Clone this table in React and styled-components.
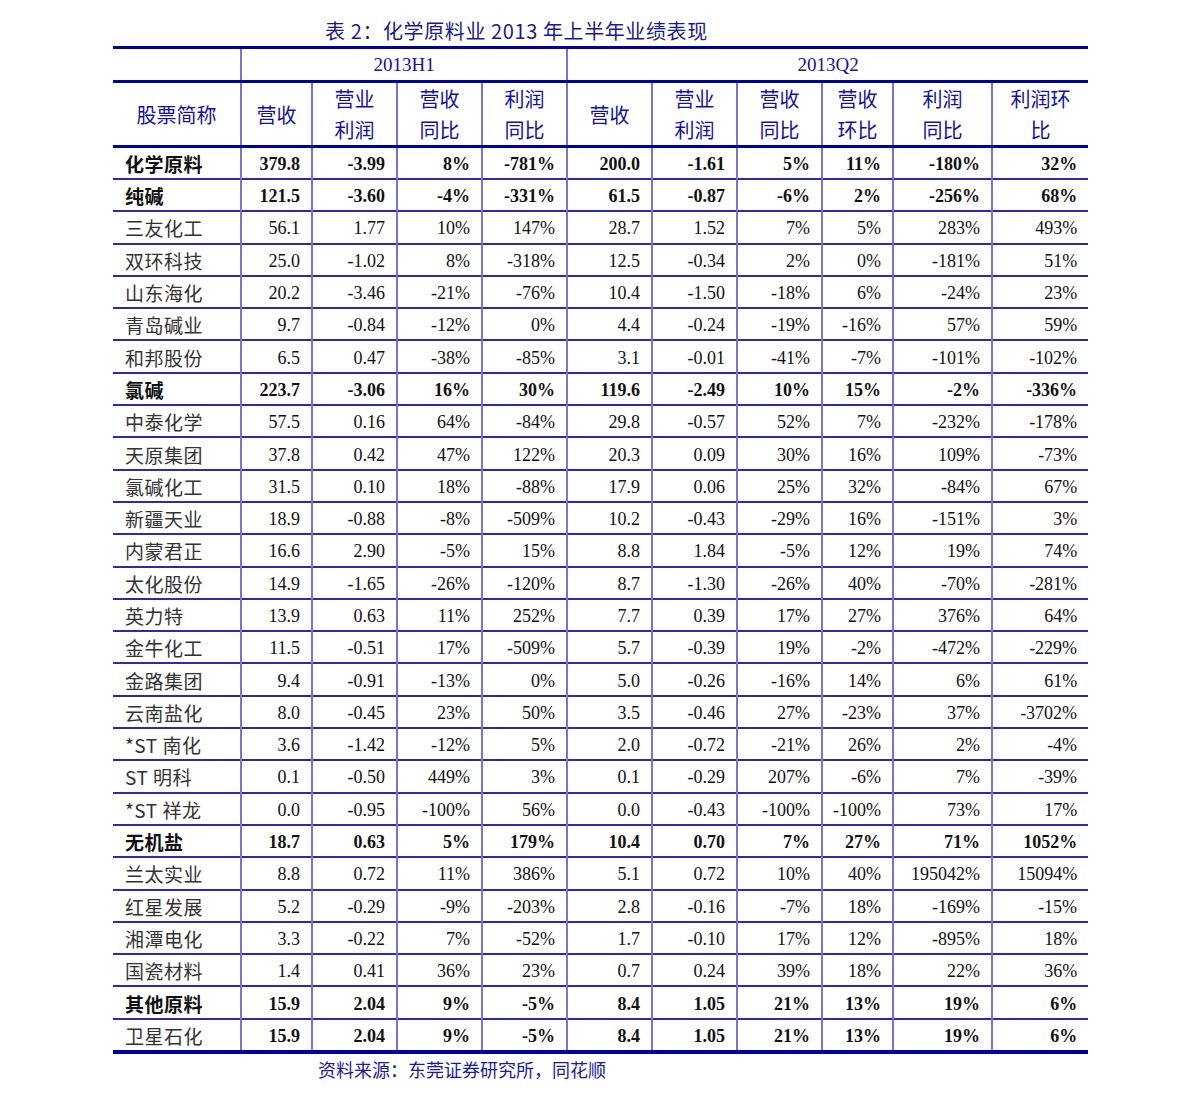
import styled, { createGlobalStyle } from "styled-components";

const GlobalStyle = createGlobalStyle`
  html, body {
    margin: 0;
    padding: 0;
    background: #ffffff;
  }
`;

const Page = styled.div`
  width: 1191px;
  height: 1098px;
  padding-left: 113px;
  box-sizing: border-box;
  display: flex;
  flex-direction: column;
`;

const Title = styled.div`
  height: 46px;
  padding-left: 212px;
  padding-top: 17px;
  box-sizing: border-box;
  font-family: "Noto Sans CJK SC", "Liberation Sans", sans-serif;
  font-size: 20px;
  letter-spacing: 0.6px;
  line-height: 28px;
  color: #1a1a8c;
  white-space: nowrap;
`;

const Table = styled.table`
  width: 975px;
  border-collapse: collapse;
  table-layout: fixed;
  border-top: 3px solid #00009a;
  border-bottom: 4px solid #00009a;
`;

const HeadCell = styled.th`
  font-family: ${(p) =>
    p.$latin ? `"Liberation Serif", serif` : `"Noto Sans CJK SC", sans-serif`};
  font-weight: normal;
  font-size: ${(p) => (p.$latin ? "19px" : "20px")};
  line-height: 31px;
  color: #1212a0;
  text-align: center;
  padding: 0;
  height: ${(p) => (p.$tall ? "62px" : "31px")};
  border-bottom: 3px solid #00009a;
  border-left: ${(p) => (p.$first ? "none" : "2px solid #7676d2")};
`;

const Row = styled.tr`
  height: 32.3px;
  border-bottom: ${(p) => (p.$last ? "none" : "2px solid #2a2aac")};
`;

const NameCell = styled.td`
  font-family: "Noto Sans CJK SC", "Liberation Serif", sans-serif;
  font-size: 19px;
  font-weight: ${(p) => (p.$bold ? 700 : 400)};
  color: ${(p) => (p.$bold ? "#111" : "#333")};
  padding: 1px 0 0 12px;
  white-space: nowrap;
  line-height: 29px;
  letter-spacing: 0.5px;
`;

const NumCell = styled.td`
  font-family: "Liberation Serif", "Times New Roman", serif;
  font-size: 18px;
  font-weight: ${(p) => (p.$bold ? 700 : 400)};
  color: #111;
  text-align: right;
  padding: 3px 11px 0 0;
  border-left: 2px solid #7676d2;
  white-space: nowrap;
  line-height: 27px;
`;

const Source = styled.div`
  padding-left: 205px;
  padding-top: 3px;
  font-family: "Noto Sans CJK SC", "Liberation Sans", sans-serif;
  font-size: 18px;
  line-height: 24px;
  color: #1a1a9c;
  white-space: nowrap;
`;

const widths = [128, 71, 85, 85, 85, 85, 85, 85, 71, 99, 96];

const headers = [
  ["营收"],
  ["营业", "利润"],
  ["营收", "同比"],
  ["利润", "同比"],
  ["营收"],
  ["营业", "利润"],
  ["营收", "同比"],
  ["营收", "环比"],
  ["利润", "同比"],
  ["利润环", "比"],
];

// [name, boldName, boldNums, ...values]
const rows = [
  ["化学原料", 1, 1, "379.8", "-3.99", "8%", "-781%", "200.0", "-1.61", "5%", "11%", "-180%", "32%"],
  ["纯碱", 1, 1, "121.5", "-3.60", "-4%", "-331%", "61.5", "-0.87", "-6%", "2%", "-256%", "68%"],
  ["三友化工", 0, 0, "56.1", "1.77", "10%", "147%", "28.7", "1.52", "7%", "5%", "283%", "493%"],
  ["双环科技", 0, 0, "25.0", "-1.02", "8%", "-318%", "12.5", "-0.34", "2%", "0%", "-181%", "51%"],
  ["山东海化", 0, 0, "20.2", "-3.46", "-21%", "-76%", "10.4", "-1.50", "-18%", "6%", "-24%", "23%"],
  ["青岛碱业", 0, 0, "9.7", "-0.84", "-12%", "0%", "4.4", "-0.24", "-19%", "-16%", "57%", "59%"],
  ["和邦股份", 0, 0, "6.5", "0.47", "-38%", "-85%", "3.1", "-0.01", "-41%", "-7%", "-101%", "-102%"],
  ["氯碱", 1, 1, "223.7", "-3.06", "16%", "30%", "119.6", "-2.49", "10%", "15%", "-2%", "-336%"],
  ["中泰化学", 0, 0, "57.5", "0.16", "64%", "-84%", "29.8", "-0.57", "52%", "7%", "-232%", "-178%"],
  ["天原集团", 0, 0, "37.8", "0.42", "47%", "122%", "20.3", "0.09", "30%", "16%", "109%", "-73%"],
  ["氯碱化工", 0, 0, "31.5", "0.10", "18%", "-88%", "17.9", "0.06", "25%", "32%", "-84%", "67%"],
  ["新疆天业", 0, 0, "18.9", "-0.88", "-8%", "-509%", "10.2", "-0.43", "-29%", "16%", "-151%", "3%"],
  ["内蒙君正", 0, 0, "16.6", "2.90", "-5%", "15%", "8.8", "1.84", "-5%", "12%", "19%", "74%"],
  ["太化股份", 0, 0, "14.9", "-1.65", "-26%", "-120%", "8.7", "-1.30", "-26%", "40%", "-70%", "-281%"],
  ["英力特", 0, 0, "13.9", "0.63", "11%", "252%", "7.7", "0.39", "17%", "27%", "376%", "64%"],
  ["金牛化工", 0, 0, "11.5", "-0.51", "17%", "-509%", "5.7", "-0.39", "19%", "-2%", "-472%", "-229%"],
  ["金路集团", 0, 0, "9.4", "-0.91", "-13%", "0%", "5.0", "-0.26", "-16%", "14%", "6%", "61%"],
  ["云南盐化", 0, 0, "8.0", "-0.45", "23%", "50%", "3.5", "-0.46", "27%", "-23%", "37%", "-3702%"],
  ["*ST 南化", 0, 0, "3.6", "-1.42", "-12%", "5%", "2.0", "-0.72", "-21%", "26%", "2%", "-4%"],
  ["ST 明科", 0, 0, "0.1", "-0.50", "449%", "3%", "0.1", "-0.29", "207%", "-6%", "7%", "-39%"],
  ["*ST 祥龙", 0, 0, "0.0", "-0.95", "-100%", "56%", "0.0", "-0.43", "-100%", "-100%", "73%", "17%"],
  ["无机盐", 1, 1, "18.7", "0.63", "5%", "179%", "10.4", "0.70", "7%", "27%", "71%", "1052%"],
  ["兰太实业", 0, 0, "8.8", "0.72", "11%", "386%", "5.1", "0.72", "10%", "40%", "195042%", "15094%"],
  ["红星发展", 0, 0, "5.2", "-0.29", "-9%", "-203%", "2.8", "-0.16", "-7%", "18%", "-169%", "-15%"],
  ["湘潭电化", 0, 0, "3.3", "-0.22", "7%", "-52%", "1.7", "-0.10", "17%", "12%", "-895%", "18%"],
  ["国瓷材料", 0, 0, "1.4", "0.41", "36%", "23%", "0.7", "0.24", "39%", "18%", "22%", "36%"],
  ["其他原料", 1, 1, "15.9", "2.04", "9%", "-5%", "8.4", "1.05", "21%", "13%", "19%", "6%"],
  ["卫星石化", 0, 1, "15.9", "2.04", "9%", "-5%", "8.4", "1.05", "21%", "13%", "19%", "6%"],
];

const App = () => {
  return (
    <>
      <GlobalStyle />
      <Page>
        <Title>表 2：化学原料业 2013 年上半年业绩表现</Title>
        <Table>
          <colgroup>
            {widths.map((w, i) => (
              <col key={i} style={{ width: w }} />
            ))}
          </colgroup>
          <thead>
            <tr>
              <HeadCell $first />
              <HeadCell $latin colSpan={4}>
                2013H1
              </HeadCell>
              <HeadCell $latin colSpan={6}>
                2013Q2
              </HeadCell>
            </tr>
            <tr>
              <HeadCell $first $tall>
                股票简称
              </HeadCell>
              {headers.map((lines, i) => (
                <HeadCell key={i} $tall>
                  {lines.map((l, j) => (
                    <div key={j}>{l}</div>
                  ))}
                </HeadCell>
              ))}
            </tr>
          </thead>
          <tbody>
            {rows.map(([name, boldName, boldNums, ...vals], i) => (
              <Row key={i} $last={i === rows.length - 1}>
                <NameCell $bold={!!boldName}>{name}</NameCell>
                {vals.map((v, j) => (
                  <NumCell key={j} $bold={!!boldNums}>
                    {v}
                  </NumCell>
                ))}
              </Row>
            ))}
          </tbody>
        </Table>
        <Source>资料来源：东莞证券研究所，同花顺</Source>
      </Page>
    </>
  );
};

export default App;
